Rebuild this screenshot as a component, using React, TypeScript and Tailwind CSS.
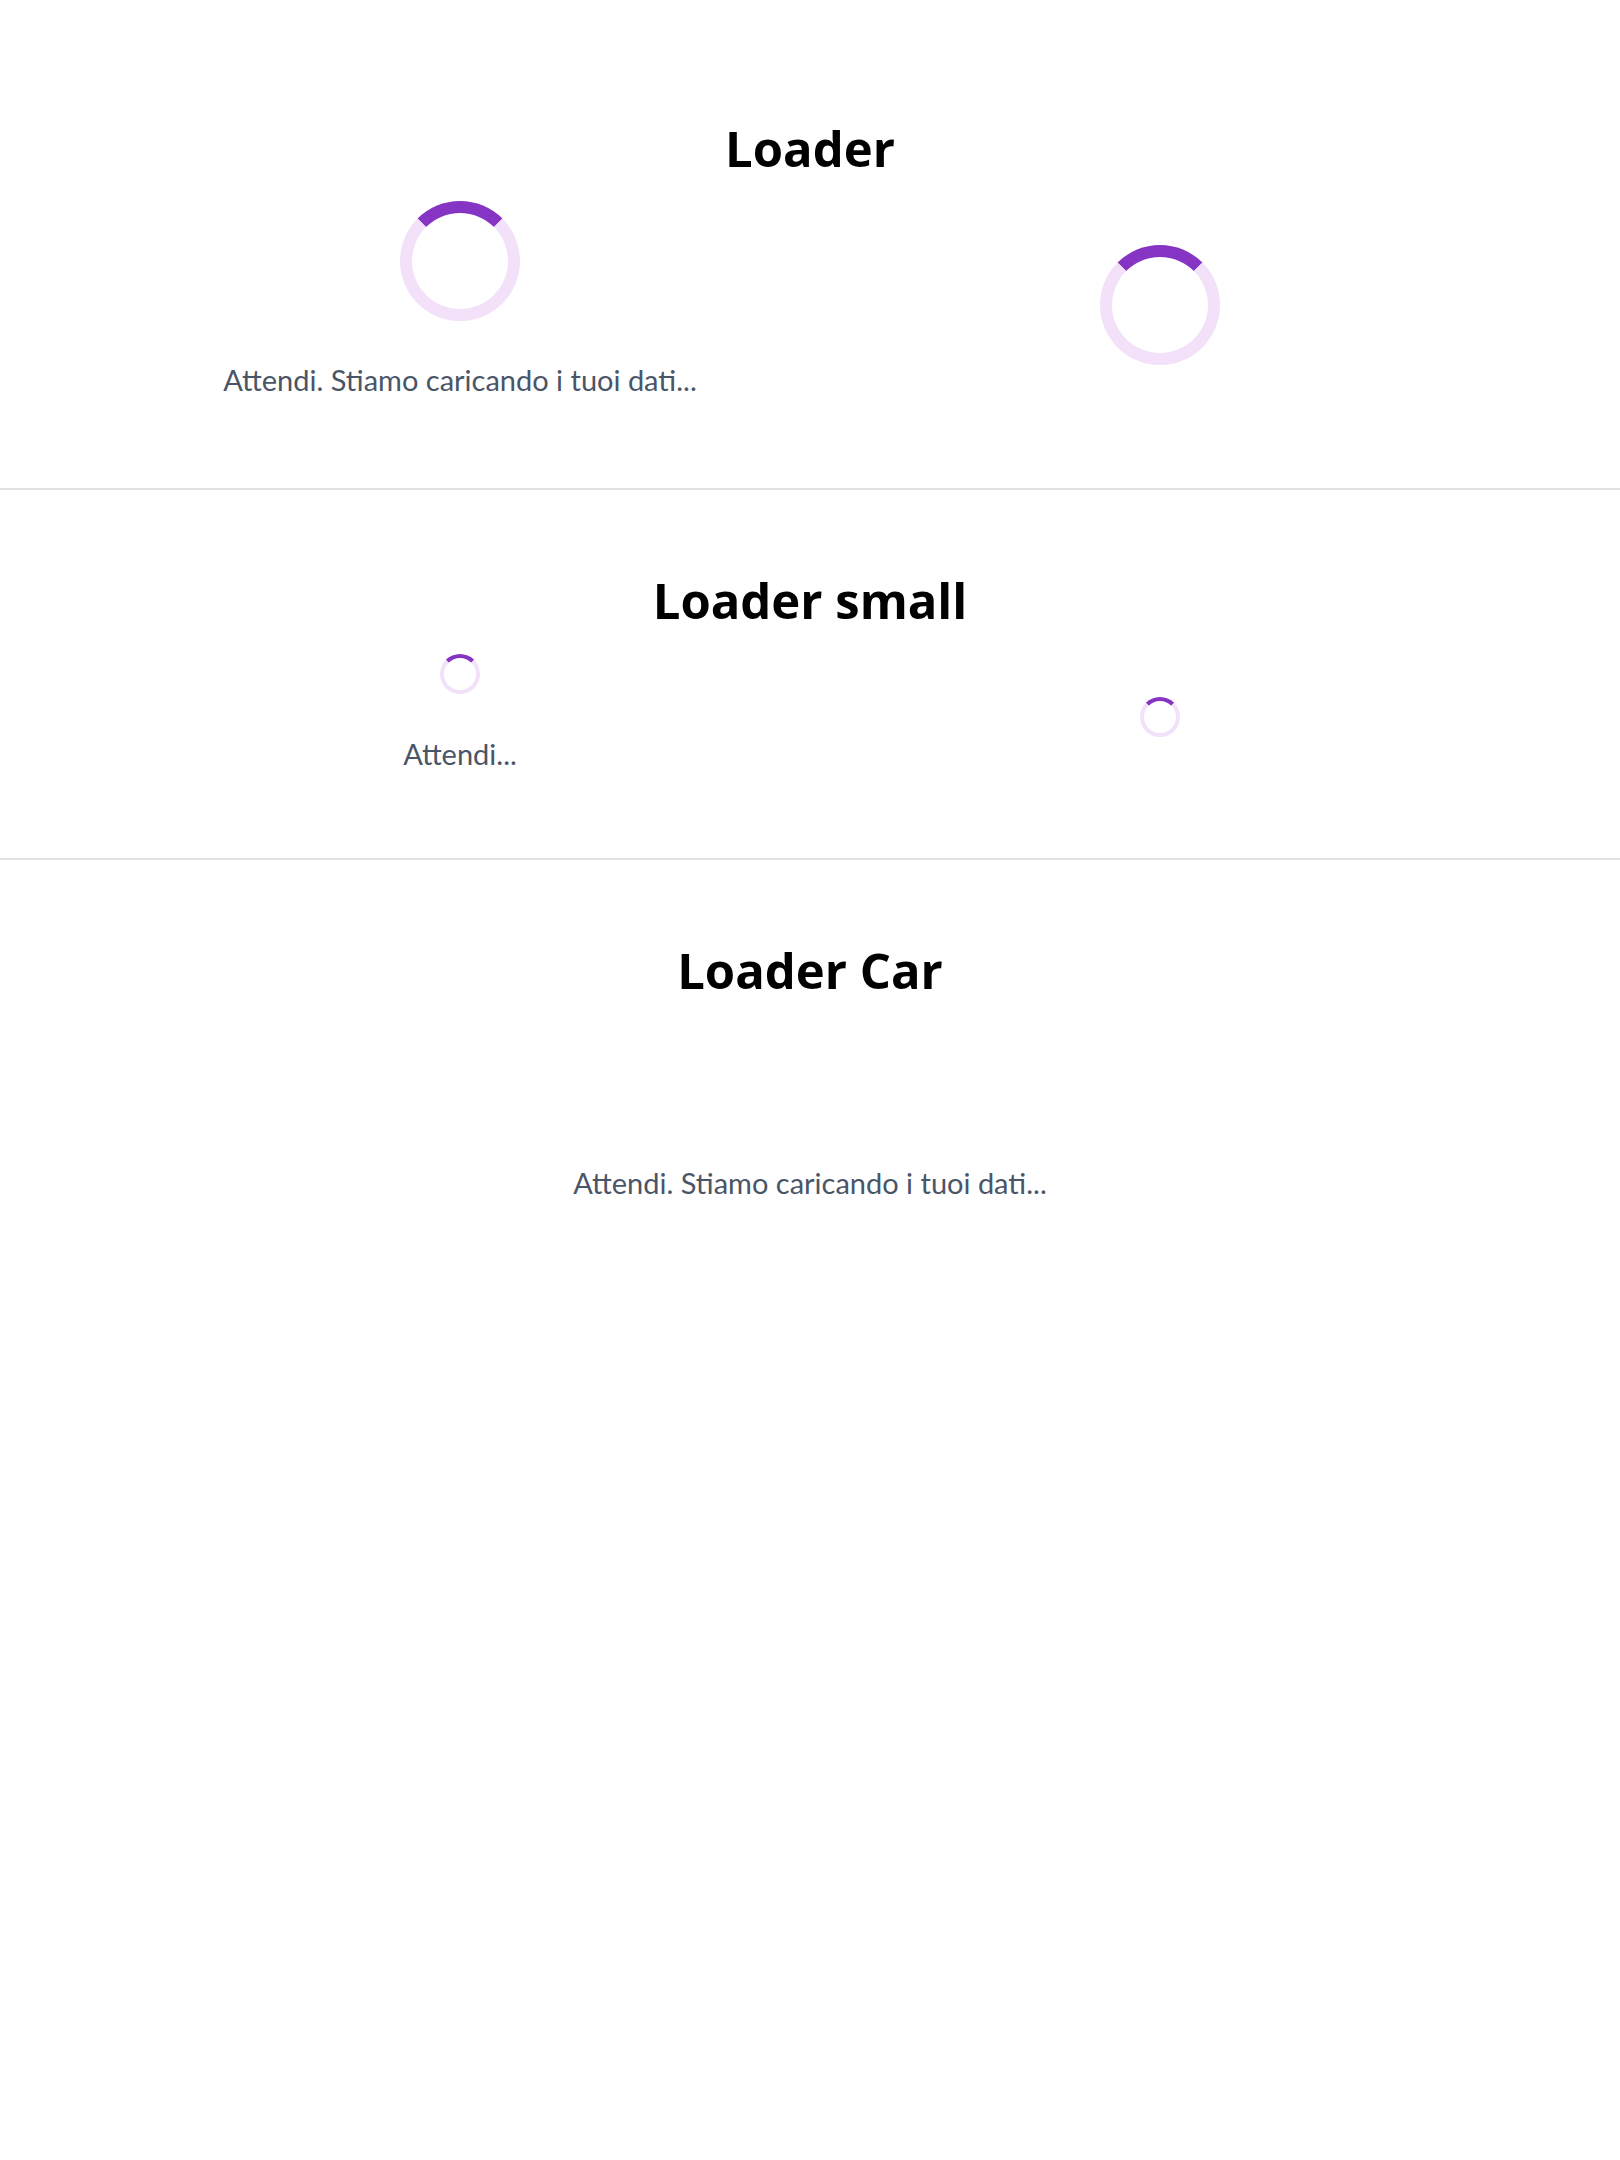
import React from "react";

const titleClass =
  "text-center text-[49px] leading-[49px] font-bold text-black font-['Open_Sans',sans-serif]";
const textClass =
  "text-[29px] leading-[45px] text-[#4a5568] font-['Lato',sans-serif] whitespace-nowrap";

function Spinner({ small }: { small?: boolean }) {
  return (
    <div
      className={
        small
          ? "w-10 h-10 rounded-full border-4 border-[#f2e1f8] border-t-[#8634c3]"
          : "w-[120px] h-[120px] rounded-full border-[12px] border-[#f2e1f8] border-t-[#8634c3]"
      }
    />
  );
}

function Section({
  title,
  children,
  className = "",
}: {
  title: string;
  children: React.ReactNode;
  className?: string;
}) {
  return (
    <section className={className}>
      <h2 className={titleClass}>{title}</h2>
      {children}
    </section>
  );
}

export default function App() {
  return (
    <div className="min-h-screen bg-white pt-10">
      <Section title="Loader" className="pt-[84px] pb-[80px] border-b-2 border-[#e0e0e0]">
        <div className="mx-auto mt-[28px] grid w-[1400px] grid-cols-2 items-center">
          <div className="flex flex-col items-center pb-[6px]">
            <Spinner />
            <p className={`${textClass} mt-[36px]`}>
              Attendi. Stiamo caricando i tuoi dati...
            </p>
          </div>
          <div className="flex justify-center">
            <Spinner />
          </div>
        </div>
      </Section>

      <Section title="Loader small" className="pt-[86px] pb-[79px] border-b-2 border-[#e0e0e0]">
        <div className="mx-auto mt-[29px] grid w-[1400px] grid-cols-2 items-center">
          <div className="flex flex-col items-center pb-[3px]">
            <Spinner small />
            <p className={`${textClass} mt-[37px]`}>Attendi...</p>
          </div>
          <div className="flex justify-center">
            <Spinner small />
          </div>
        </div>
      </Section>

      <Section title="Loader Car" className="pt-[86px]">
        <div className="mx-auto mt-[31px] flex flex-col items-center">
          {/* car animation area, renders empty */}
          <div className="h-[98px] w-[200px]" />
          <p className={`${textClass} mt-[36px]`}>
            Attendi. Stiamo caricando i tuoi dati...
          </p>
        </div>
      </Section>
    </div>
  );
}
